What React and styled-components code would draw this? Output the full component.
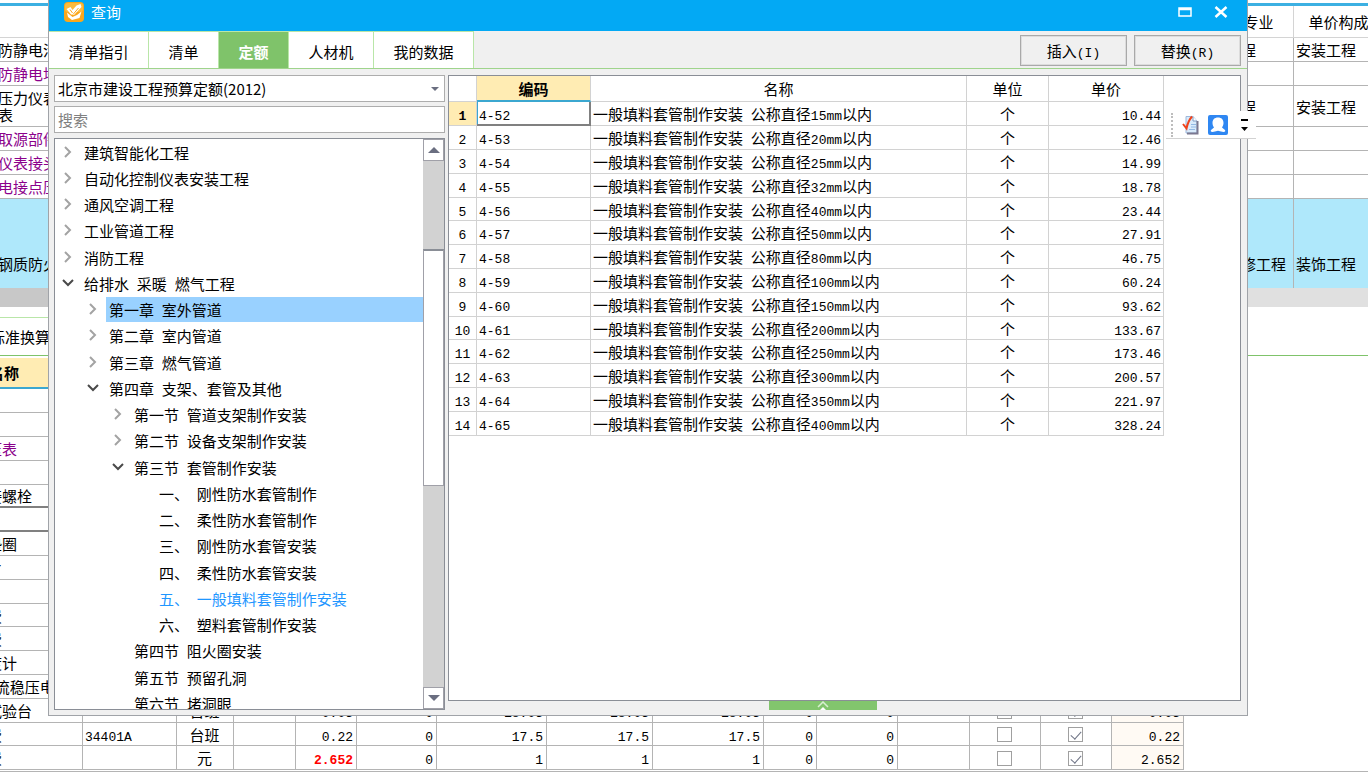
import React from "react";
import styled, { createGlobalStyle, css } from "styled-components";

const GlobalStyle = createGlobalStyle`
  * { box-sizing: border-box; }
  body {
    margin: 0;
    background: #fff;
    color: #000;
    font: 15px/18px "Noto Sans CJK SC", sans-serif;
  }
  button, input, select { font: inherit; color: inherit; margin: 0; }
  button { cursor: pointer; }
`;

/* ---------- text ---------- */

const Latin = styled.span`
  font-family: "Liberation Mono", monospace;
  font-size: 13px;
  line-height: 1;
  white-space: pre;
`;

function Mixed({ children }) {
  return String(children)
    .split(/([\x20-\x7e]+)/)
    .map((part, i) => (i % 2 ? <Latin key={i}>{part}</Latin> : part));
}

/* ---------- page behind the dialog ---------- */

const Page = styled.div`
  position: relative;
  height: 100vh;
  overflow: hidden;
`;

const Upper = styled.section`
  height: 285px;
  margin-top: 3px;
  border-top: 3px solid #3cb0e2;
  overflow: hidden;
`;

const Sheet = styled.table`
  table-layout: fixed;
  border-collapse: separate;
  border-spacing: 0;
`;

const UpperSheet = styled(Sheet)`
  width: calc(100% + 48px);
  margin-left: -2px;
`;

const UpperRow = styled.tr`
  height: ${(p) => p.$h}px;
  background: ${(p) => (p.$active ? "#afe8fb" : "#fff")};
  color: ${(p) => (p.$tone === "purple" ? "#8b008b" : "#000")};
`;

const cell = css`
  padding: 1px 2px 0;
  border-right: 1px solid #b4b4b4;
  border-bottom: 1px solid #b4b4b4;
  font-weight: 400;
  text-align: ${(p) => p.$align || "left"};
  white-space: nowrap;
  overflow: hidden;
`;

const UpperHead = styled.th`
  ${cell}
  border-color: #d4d4d4;
`;

const UpperCell = styled.td`
  ${cell}
`;

const NameCell = styled.td`
  ${cell}
  padding: 0;
  line-height: 17px;
  white-space: pre-line;
`;

const Scroll = styled.div`
  height: 19px;
  background: #e0e0e0;
`;

const ScrollThumb = styled.div`
  width: 50%;
  height: 100%;
  background: #c8c8c8;
`;

const LowerTabs = styled.nav`
  display: flex;
  height: 49px;
  padding-top: 10px;
  border-bottom: 1px solid #7fc36a;
`;

const LowerTab = styled.button`
  width: 82px;
  padding: 0;
  border: 0;
  border-top: 1px solid #b9e6a8;
  border-right: 1px solid #b9e6a8;
  background: #fff;
  text-indent: -10px;
  text-align: left;
  white-space: nowrap;
`;

const Lower = styled.section`
  padding-top: 2px;
  padding-bottom: 1px;
  border-bottom: 1px solid #b4b4b4;
`;

const LowerSheet = styled(Sheet)`
  width: 1197px;
  margin-left: -13px;
  tbody tr { height: 24px; }
  tbody tr:nth-child(5n) { height: 23px; }
`;

const LowerHead = styled.th`
  ${cell}
  height: 31px;
  background: #ffecb3;
  border-bottom: 2px solid #3ba7d0;
  font-weight: 700;
`;

const LowerCell = styled.td`
  ${cell}
  padding: 1px 3px 0 ${(p) => (p.$name ? 0 : 2)}px;
  background: ${(p) => (p.$total ? "#fffaf4" : "#fff")};
  color: ${(p) => (p.$tone === "purple" ? "#8b008b" : p.$tone === "red" ? "#f00" : "#000")};
  font-weight: ${(p) => (p.$tone === "red" ? 700 : 400)};
  white-space: pre;
  ${(p) => p.$edge && "border-bottom: 2px solid #808080;"}
`;

const Check = styled.input`
  appearance: none;
  position: relative;
  display: block;
  width: 15px;
  height: 15px;
  margin: 0 auto;
  border: 1px solid #a0a0a0;
  background: #fff;
  &:checked::after {
    content: "";
    position: absolute;
    left: 4px;
    top: 1px;
    width: 5px;
    height: 9px;
    border: solid #6f7486;
    border-width: 0 1px 1px 0;
    transform: rotate(42deg);
  }
`;

/* ---------- dialog ---------- */

const Dialog = styled.main`
  position: absolute;
  top: 0;
  left: 48px;
  right: 120px;
  display: flex;
  flex-direction: column;
  border: 1px solid #a0a3a8;
  border-top: 0;
  background: #f0f0f0;
`;

const TitleBar = styled.header`
  display: flex;
  align-items: center;
  gap: 7px;
  height: 31px;
  padding: 0 17px 8px 15px;
  background: #03a9f4;
  color: #fff;
`;

const Title = styled.h1`
  flex: 1;
  margin: 0;
  font-size: 15px;
  font-weight: 400;
`;

const WindowButton = styled.button`
  display: grid;
  place-items: center;
  width: 18px;
  height: 18px;
  margin-left: 11px;
  padding: 0;
  border: 0;
  background: none;
`;

const TabBar = styled.div`
  display: flex;
  height: 38px;
  border-bottom: 1px solid #9fd48c;
`;

const Tab = styled.button`
  width: ${(p) => p.$w}px;
  padding: 4px 0 0;
  border: 0;
  border-top: 1px solid #b9e6a8;
  border-right: 1px solid #b9e6a8;
  background: ${(p) => (p.$active ? "#7fc36a" : "#fff")};
  color: ${(p) => (p.$active ? "#fff" : "#000")};
  font-weight: ${(p) => (p.$active ? 700 : 400)};
`;

const Actions = styled.div`
  display: flex;
  gap: 7px;
  margin-left: auto;
  padding: 4px 6px 2px 0;
`;

const Action = styled.button`
  width: 107px;
  padding: 0;
  border: 1px solid #a9a9a9;
  outline: 1px solid #dcdcdc;
  outline-offset: -2px;
  background: #f0f0f0;
`;

const Body = styled.div`
  display: flex;
  gap: 3px;
  padding: 6px 6px 5px 5px;
`;

const Side = styled.aside`
  display: flex;
  flex-direction: column;
  width: 391px;
  flex: none;
`;

const Field = styled.label`
  position: relative;
  display: block;
  margin-bottom: 4px;
  svg { position: absolute; right: 6px; top: 12px; pointer-events: none; }
`;

const fieldBox = css`
  display: block;
  width: 100%;
  height: 27px;
  padding: 0 3px;
  border: 1px solid #adadad;
  border-radius: 0;
  background: #fff;
`;

const Select = styled.select`
  ${fieldBox}
  appearance: none;
`;

const Search = styled.input`
  ${fieldBox}
  &::placeholder { color: #808080; opacity: 1; }
`;

const TreeBox = styled.div`
  display: flex;
  height: 572px;
  margin-top: 1px;
  border: 1px solid #8a8e96;
  background: #fff;
  overflow: hidden;
`;

const Tree = styled.ul`
  flex: 1;
  margin: 0;
  padding: 0;
  list-style: none;
  li { height: 26px; }
  li:nth-child(4n) { height: 27px; }
`;

const TreeRow = styled.button`
  display: flex;
  align-items: center;
  width: 100%;
  height: 26px;
  padding: 0 0 0 ${(p) => 7 + p.$level * 25}px;
  border: 0;
  background: none;
  text-align: left;
  svg { flex: none; width: 12px; height: 12px; margin-right: 3px; }
`;

const TreeLabel = styled.span`
  flex: 1;
  height: 25px;
  margin-left: 4px;
  padding: 0 0 0 3px;
  line-height: 26px;
  white-space: nowrap;
  background: ${(p) => (p.$selected ? "#99d1ff" : "transparent")};
  color: ${(p) => (p.$current ? "#1e96ff" : "#000")};
`;

const VScroll = styled.div`
  display: flex;
  flex-direction: column;
  width: 21px;
  background: #d2d2d2;
`;

const ScrollButton = styled.button`
  display: grid;
  place-items: center;
  height: 22px;
  padding: 0;
  border: 1px solid #a0a0a8;
  background: #fff;
`;

const TreeThumb = styled.div`
  height: 237px;
  margin: 88px 0 auto;
  border: 1px solid #a0a0a8;
  border-top: 2px solid #8a8e96;
  background: #fff;
`;

const Main = styled.section`
  flex: 1;
  min-width: 0;
  display: flex;
  flex-direction: column;
`;

const GridBox = styled.div`
  flex: 1;
  border: 1px solid #8a8e96;
  background: #fff;
  overflow: hidden;
`;

const Handle = styled.button`
  display: grid;
  place-items: center;
  width: 108px;
  height: 9px;
  margin-left: 321px;
  padding: 0;
  border: 0;
  background: #82c56d;
`;

const DataGrid = styled(Sheet)`
  width: 715px;
  tbody tr { height: 24px; }
  tbody tr:nth-child(5n) { height: 23px; }
`;

const gridLine = css`
  border-color: #d2d2d2;
`;

const GridHead = styled.th`
  ${cell}
  ${gridLine}
  height: 26px;
  ${(p) =>
    p.$active &&
    css`
      background: #ffecb3;
      border-bottom: 2px solid #3ba7d0;
      font-weight: 700;
    `}
`;

const RowNumber = styled.th`
  ${cell}
  ${gridLine}
  padding: 1px 0 0;
  text-align: center;
  background: ${(p) => (p.$active ? "#ffecb3" : "#fff")};
  font-weight: ${(p) => (p.$active ? 700 : 400)};
`;

const GridCell = styled.td`
  ${cell}
  ${gridLine}
  ${(p) =>
    p.$active &&
    css`
      border-right: 2px solid #808080;
      border-bottom: 2px solid #808080;
      box-shadow: inset 1px 0 #3ba7d0;
    `}
`;

const FloatBar = styled.div`
  position: absolute;
  top: 111px;
  right: 112px;
  display: flex;
  align-items: center;
  gap: 9px;
  width: 90px;
  height: 28px;
  padding-left: 5px;
  border-bottom: 1px solid #d2d2d2;
  background: #fff;
`;

const FloatButton = styled.button`
  display: flex;
  padding: 0;
  border: 0;
  background: none;
`;

const Grip = styled.span`
  width: 2px;
  height: 24px;
  border-left: 2px dotted #bdbdbd;
`;

/* ---------- icons ---------- */

const Logo = () => (
  <svg width="20" height="20" viewBox="0 0 20 20" aria-hidden="true">
    <rect width="20" height="20" rx="4" fill="#fba71b" />
    <rect x="1" y="1" width="18" height="9" rx="3" fill="#fdbb3e" />
    <path d="M2.500 7L6.500 5l2 3L12.500 3.500 16.500 2l1 3-7.500 8-3-.5z" fill="#fff" />
    <path d="M3 10.500L4 15l4 3 7.500-2L17.500 9.500 13 13l-4.500 2z" fill="#fff" />
    <path d="M6 7.500l2.500 3.500M9 12.500l5.500-6.500" stroke="#fba71b" fill="none" />
  </svg>
);

const Chevron = ({ open }) => (
  <svg viewBox="0 0 12 12" fill="none" aria-hidden="true">
    {open ? (
      <path d="M1 3l5 5 5-5" stroke="#4a4a4a" strokeWidth="2" />
    ) : (
      <path d="M3 1l5 5-5 5" stroke="#a3a3a3" strokeWidth="2" />
    )}
  </svg>
);

const Triangle = ({ up, w = 12, h = 6 }) => (
  <svg width={w} height={h} viewBox="0 0 12 6" aria-hidden="true">
    <path d={up ? "M0 6L6 0l6 6z" : "M0 0h12L6 6z"} fill="#6a6e80" />
  </svg>
);

const DocIcon = () => (
  <svg width="17" height="20" viewBox="0 0 17 20" aria-hidden="true">
    <path d="M4 1.500h7l4 4.500v12H4z" fill="#d9ebfb" stroke="#9db8dc" />
    <path d="M11 1.500V6h4" fill="#fff" stroke="#7e9cc4" />
    <path d="M9 9.500h5M9 12h5M7 14.500h6" stroke="#92b9e4" />
    <path d="M15.500 6v12.500H5" stroke="#7b7890" strokeWidth="2" fill="none" />
    <path d="M1 9l3.500 4.500Q6 6 10 1.500" stroke="#f0431c" strokeWidth="2" fill="none" />
  </svg>
);

const PersonIcon = () => (
  <svg width="20" height="20" viewBox="0 0 20 20" aria-hidden="true">
    <rect width="20" height="20" rx="2" fill="#2f87f2" />
    <path
      d="M10 2.500c3.500 0 5.500 2.200 5.500 5.500 0 1.800-.7 3.400-1.500 4.500l3 2.500c.7 1 0 2-1.500 2L13 16.500l-3-.7-3 .7-2.500.5C3 17 2.300 16 3 15l3-2.500C5.200 11.400 4.500 9.800 4.500 8c0-3.300 2-5.500 5.500-5.500z"
      fill="#fff"
    />
  </svg>
);

/* ---------- data ---------- */

const upperRows = [
  { h: 24, name: "防静电活", a: "安装工程", b: "安装工程" },
  { h: 24, name: "防静电地", tone: "purple" },
  { h: 41, name: "压力仪表\n表", a: "安装工程", b: "安装工程" },
  { h: 24, name: "取源部件", tone: "purple" },
  { h: 24, name: "仪表接头", tone: "purple" },
  { h: 24, name: "电接点压", tone: "purple" },
  { h: 130, name: "钢质防火", a: "装饰装修工程", b: "装饰工程", active: true },
];

const lowerWidths = [96, 94, 57, 62, 61, 80, 110, 106, 111, 53, 81, 72, 71, 71, 72];

const lowerRows = [
  { name: "" },
  { name: "" },
  { name: "压表", tone: "purple" },
  { name: "" },
  { name: "接螺栓", edge: true },
  { name: "", edge: true },
  { name: "垫圈" },
  { name: "片" },
  { name: "" },
  { name: "费" },
  { name: "费" },
  { name: "度计" },
  { name: " 流稳压电" },
  { name: "试验台", unit: "台班", values: ["0.03", "0", "18.03", "18.03", "18.03", "0", "0"], total: "0.03" },
  { name: "费", code: "34401A", unit: "台班", values: ["0.22", "0", "17.5", "17.5", "17.5", "0", "0"], total: "0.22" },
  { name: "费", unit: "元", values: ["2.652", "0", "1", "1", "1", "0", "0"], total: "2.652", strong: true },
];

const tree = [
  [0, "建筑智能化工程", "closed"],
  [0, "自动化控制仪表安装工程", "closed"],
  [0, "通风空调工程", "closed"],
  [0, "工业管道工程", "closed"],
  [0, "消防工程", "closed"],
  [0, "给排水 采暖 燃气工程", "open"],
  [1, "第一章 室外管道", "closed"],
  [1, "第二章 室内管道", "closed"],
  [1, "第三章 燃气管道", "closed"],
  [1, "第四章 支架、套管及其他", "open"],
  [2, "第一节 管道支架制作安装", "closed"],
  [2, "第二节 设备支架制作安装", "closed"],
  [2, "第三节 套管制作安装", "open"],
  [3, "一、 刚性防水套管制作"],
  [3, "二、 柔性防水套管制作"],
  [3, "三、 刚性防水套管安装"],
  [3, "四、 柔性防水套管安装"],
  [3, "五、 一般填料套管制作安装"],
  [3, "六、 塑料套管制作安装"],
  [2, "第四节 阻火圈安装"],
  [2, "第五节 预留孔洞"],
  [2, "第六节 堵洞眼"],
];

const items = [
  [15, "10.44"], [20, "12.46"], [25, "14.99"], [32, "18.78"], [40, "23.44"],
  [50, "27.91"], [80, "46.75"], [100, "60.24"], [150, "93.62"], [200, "133.67"],
  [250, "173.46"], [300, "200.57"], [350, "221.97"], [400, "328.24"],
];

const tabs = [
  ["清单指引", 100],
  ["清单", 70],
  ["定额", 70],
  ["人材机", 85],
  ["我的数据", 100],
];

/* ---------- parts ---------- */

function UpperTable() {
  return (
    <Upper>
      <UpperSheet>
        <colgroup>
          <col />
          <col style={{ width: 100 }} />
          <col style={{ width: 120 }} />
        </colgroup>
        <thead>
          <UpperRow $h={32}>
            <UpperHead />
            <UpperHead $align="center">取费专业</UpperHead>
            <UpperHead $align="center">单价构成文件</UpperHead>
          </UpperRow>
        </thead>
        <tbody>
          {upperRows.map((r) => (
            <UpperRow key={r.name} $h={r.h} $tone={r.tone} $active={r.active}>
              <NameCell>{r.name}</NameCell>
              <UpperCell>{r.a}</UpperCell>
              <UpperCell>{r.b}</UpperCell>
            </UpperRow>
          ))}
        </tbody>
      </UpperSheet>
    </Upper>
  );
}

function LowerTable() {
  return (
    <Lower>
      <LowerSheet>
        <colgroup>
          {lowerWidths.map((w, i) => (
            <col key={i} style={{ width: w }} />
          ))}
        </colgroup>
        <thead>
          <tr>
            <LowerHead>名称</LowerHead>
            {lowerWidths.slice(1).map((_, i) => (
              <LowerHead key={i} />
            ))}
          </tr>
        </thead>
        <tbody>
          {lowerRows.map((r, n) => (
            <tr key={n}>
              <LowerCell $name $tone={r.tone} $edge={r.edge}>
                <Mixed>{r.name}</Mixed>
              </LowerCell>
              <LowerCell><Mixed>{r.code || ""}</Mixed></LowerCell>
              <LowerCell $align="center">{r.unit}</LowerCell>
              <LowerCell />
              {Array.from({ length: 7 }, (_, i) => (
                <LowerCell key={i} $align="right" $tone={r.strong && i === 0 ? "red" : undefined}>
                  <Mixed>{r.values ? r.values[i] : ""}</Mixed>
                </LowerCell>
              ))}
              <LowerCell />
              <LowerCell>{r.values && <Check type="checkbox" aria-label="暂估" />}</LowerCell>
              <LowerCell>{r.values && <Check type="checkbox" aria-label="计价" defaultChecked />}</LowerCell>
              <LowerCell $align="right" $total>
                <Mixed>{r.total || ""}</Mixed>
              </LowerCell>
            </tr>
          ))}
        </tbody>
      </LowerSheet>
    </Lower>
  );
}

function TreePanel() {
  return (
    <TreeBox>
      <Tree>
        {tree.map(([level, label, state], i) => (
          <li key={i}>
            <TreeRow type="button" $level={level}>
              {state ? <Chevron open={state === "open"} /> : <svg aria-hidden="true" />}
              <TreeLabel $selected={i === 6} $current={i === 17}>
                <Mixed>{label}</Mixed>
              </TreeLabel>
            </TreeRow>
          </li>
        ))}
      </Tree>
      <VScroll>
        <ScrollButton type="button" aria-label="向上滚动"><Triangle up /></ScrollButton>
        <TreeThumb />
        <ScrollButton type="button" aria-label="向下滚动"><Triangle /></ScrollButton>
      </VScroll>
    </TreeBox>
  );
}

function ItemGrid() {
  return (
    <GridBox>
      <DataGrid>
        <colgroup>
          {[28, 114, 376, 82, 115].map((w, i) => (
            <col key={i} style={{ width: w }} />
          ))}
        </colgroup>
        <thead>
          <tr>
            <GridHead />
            <GridHead $align="center" $active>编码</GridHead>
            <GridHead $align="center">名称</GridHead>
            <GridHead $align="center">单位</GridHead>
            <GridHead $align="center">单价</GridHead>
          </tr>
        </thead>
        <tbody>
          {items.map(([size, price], i) => (
            <tr key={size}>
              <RowNumber $active={i === 0}><Mixed>{i + 1}</Mixed></RowNumber>
              <GridCell $active={i === 0}><Mixed>{`4-${52 + i}`}</Mixed></GridCell>
              <GridCell><Mixed>{`一般填料套管制作安装 公称直径${size}mm以内`}</Mixed></GridCell>
              <GridCell $align="center">个</GridCell>
              <GridCell $align="right"><Mixed>{price}</Mixed></GridCell>
            </tr>
          ))}
        </tbody>
      </DataGrid>
    </GridBox>
  );
}

export default function App() {
  return (
    <Page>
      <GlobalStyle />
      <UpperTable />
      <Scroll><ScrollThumb /></Scroll>
      <LowerTabs><LowerTab type="button">标准换算</LowerTab></LowerTabs>
      <LowerTable />

      <Dialog>
        <TitleBar>
          <Logo />
          <Title>查询</Title>
          <WindowButton type="button" aria-label="最大化">
            <svg width="14" height="10" viewBox="0 0 14 10">
              <path d="M1 1h12v8H1zM1 2.500h12" stroke="#fff" strokeWidth="1.500" fill="none" />
            </svg>
          </WindowButton>
          <WindowButton type="button" aria-label="关闭">
            <svg width="14" height="12" viewBox="0 0 14 12">
              <path d="M1.500 1l11 10M12.500 1l-11 10" stroke="#fff" strokeWidth="2.500" />
            </svg>
          </WindowButton>
        </TitleBar>
        <TabBar>
          {tabs.map(([label, w], i) => (
            <Tab key={label} type="button" $w={w} $active={i === 2}>{label}</Tab>
          ))}
          <Actions>
            <Action type="button"><Mixed>插入(I)</Mixed></Action>
            <Action type="button"><Mixed>替换(R)</Mixed></Action>
          </Actions>
        </TabBar>
        <Body>
          <Side>
            <Field>
              <Select aria-label="定额库">
                <option>北京市建设工程预算定额(2012)</option>
              </Select>
              <Triangle w={8} h={4} />
            </Field>
            <Field>
              <Search placeholder="搜索" aria-label="搜索" />
            </Field>
            <TreePanel />
          </Side>
          <Main>
            <ItemGrid />
            <Handle type="button" aria-label="展开">
              <svg width="12" height="9" viewBox="0 0 12 9" fill="none">
                <path d="M1 6l5-5 5 5" stroke="#d9efd1" strokeWidth="1.500" />
                <path d="M3 9l3-3 3 3z" fill="#fff" />
              </svg>
            </Handle>
          </Main>
        </Body>
      </Dialog>

      <FloatBar>
        <Grip />
        <FloatButton type="button" aria-label="检查"><DocIcon /></FloatButton>
        <FloatButton type="button" aria-label="用户"><PersonIcon /></FloatButton>
        <FloatButton type="button" aria-label="更多">
          <svg width="14" height="14" viewBox="0 0 14 14">
            <path d="M4 1h7v2H4zM4 9h7l-3.500 4z" fill="#000" />
          </svg>
        </FloatButton>
      </FloatBar>
    </Page>
  );
}
